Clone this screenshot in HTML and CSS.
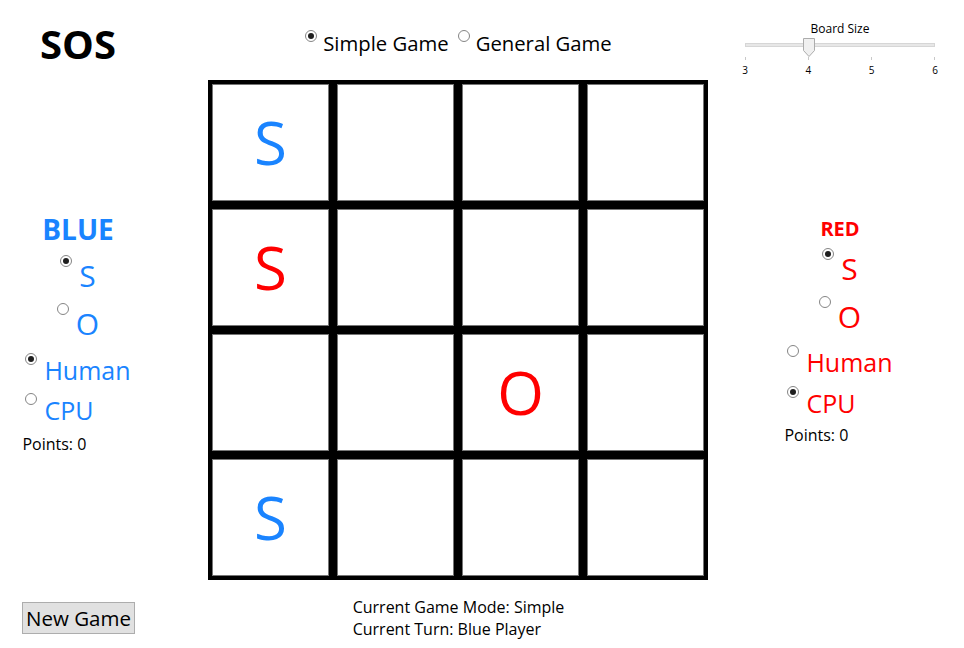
FILE: index.html
```html
<!DOCTYPE html>
<html lang="en">
<head>
<meta charset="utf-8">
<title>SOS</title>
<link rel="stylesheet" href="styles.css">
</head>
<body>
<div class="app">
  <div class="head-left"><h1 class="title">SOS</h1></div>
  <div class="head-mid">
    <div class="modes">
      <label class="radio"><span class="dot on"></span><span>Simple Game</span></label>
      <label class="radio"><span class="dot"></span><span>General Game</span></label>
    </div>
  </div>
  <div class="head-right">
    <div class="slider">
      <div class="slider-label">Board Size</div>
      <div class="track"><span class="thumb" style="left: calc(33.333% - 6px)"><svg width="12" height="19" viewBox="0 0 12 19"><path d="M0.5 0.5 H11.5 V12.5 L6 18.5 L0.5 12.5 Z" fill="#f0f0f0" stroke="#acacac"/></svg></span></div>
      <div class="ticks">
        <span class="tick">3</span>
        <span class="tick">4</span>
        <span class="tick">5</span>
        <span class="tick">6</span>
      </div>
    </div>
  </div>

  <section class="panel panel-blue">
    <div class="side-title">BLUE</div>
    <label class="pick pick-s"><span class="dot on"></span><span>S</span></label>
    <label class="pick pick-o"><span class="dot"></span><span>O</span></label>
    <div class="group">
      <label class="who who-human"><span class="dot on"></span><span>Human</span></label>
      <label class="who who-cpu"><span class="dot"></span><span>CPU</span></label>
      <div class="points">Points: 0</div>
    </div>
  </section>

  <div class="board">
    <div class="cell"><div class="btn blue">S</div></div>
    <div class="cell"><div class="btn"></div></div>
    <div class="cell"><div class="btn"></div></div>
    <div class="cell"><div class="btn"></div></div>
    <div class="cell"><div class="btn red">S</div></div>
    <div class="cell"><div class="btn"></div></div>
    <div class="cell"><div class="btn"></div></div>
    <div class="cell"><div class="btn"></div></div>
    <div class="cell"><div class="btn"></div></div>
    <div class="cell"><div class="btn"></div></div>
    <div class="cell"><div class="btn red">O</div></div>
    <div class="cell"><div class="btn"></div></div>
    <div class="cell"><div class="btn blue">S</div></div>
    <div class="cell"><div class="btn"></div></div>
    <div class="cell"><div class="btn"></div></div>
    <div class="cell"><div class="btn"></div></div>
  </div>

  <section class="panel panel-red">
    <div class="side-title">RED</div>
    <label class="pick pick-s"><span class="dot on"></span><span>S</span></label>
    <label class="pick pick-o"><span class="dot"></span><span>O</span></label>
    <div class="group">
      <label class="who who-human"><span class="dot"></span><span>Human</span></label>
      <label class="who who-cpu"><span class="dot on"></span><span>CPU</span></label>
      <div class="points">Points: 0</div>
    </div>
  </section>

  <div class="foot-left"><button class="new-game" type="button">New Game</button></div>
  <div class="foot-mid">
    <div class="status">
      <div>Current Game Mode: Simple</div>
      <div>Current Turn: Blue Player</div>
    </div>
  </div>
  <div class="foot-right"></div>
</div>
</body>
</html>
```

FILE: styles.css
```css
html, body {
  margin: 0;
  padding: 0;
  background: #ffffff;
}

body {
  font-family: "Open Sans", "Noto Sans", "Liberation Sans", sans-serif;
  color: #000000;
}

.app {
  width: 964px;
  height: 648px;
  display: grid;
  grid-template-columns: 208px 501px 255px;
  grid-template-rows: 80px 501px 67px;
}

/* ---------- header ---------- */
.head-left {
  width: 156px;
  display: flex;
  justify-content: center;
}

.title {
  margin: 16px 0 0;
  font-size: 40px;
  font-weight: 700;
  line-height: normal;
}

.head-mid {
  display: flex;
  justify-content: center;
}

.modes {
  margin-top: 30px;
  display: flex;
  gap: 9px;
  font-size: 20.3px;
  line-height: 27px;
}

.radio {
  display: flex;
  align-items: flex-start;
  gap: 6px;
}

.dot {
  width: 12px;
  height: 12px;
  box-sizing: border-box;
  border: 1px solid #858585;
  border-radius: 50%;
  background: #ffffff;
  display: flex;
  align-items: center;
  justify-content: center;
  flex: none;
}

.dot.on::after {
  content: "";
  width: 6px;
  height: 6px;
  border-radius: 50%;
  background: #1f1f1f;
}

.head-right {
  box-sizing: border-box;
  padding-left: 7px;
  display: flex;
  justify-content: center;
}

.slider {
  width: 196px;
  padding-top: 21px;
}

.slider-label {
  font-size: 12px;
  line-height: 16px;
  text-align: center;
}

.track {
  position: relative;
  margin: 6px 3px 0;
  height: 4px;
  box-sizing: border-box;
  background: #e7e7e7;
  border: 1px solid #d6d6d6;
}

.thumb {
  position: absolute;
  top: -6px;
  width: 12px;
  height: 19px;
  display: block;
}

.thumb svg {
  display: block;
}

.ticks {
  margin: 10px -4px 0;
  display: flex;
  justify-content: space-between;
}

.tick {
  width: 14px;
  display: flex;
  flex-direction: column;
  align-items: center;
  font-size: 10px;
  line-height: 14px;
}

.tick::before {
  content: "";
  width: 1px;
  height: 3px;
  background: #c8c8c8;
  margin-bottom: 3px;
}

/* ---------- side panels ---------- */
.panel {
  display: flex;
  flex-direction: column;
  align-items: center;
  line-height: normal;
}

.panel-blue {
  width: 156px;
  padding-top: 130px;
  color: #1a84ff;
}

.panel-red {
  box-sizing: border-box;
  padding-left: 7px;
  padding-top: 135px;
  color: #ff0000;
}

.side-title {
  font-weight: 700;
}

.panel-blue .side-title {
  font-size: 28px;
}

.panel-red .side-title {
  font-size: 20px;
}

.pick,
.who {
  display: flex;
  align-items: flex-start;
  gap: 7px;
}

.pick {
  font-size: 30px;
}

.who {
  font-size: 25px;
}

.group {
  display: flex;
  flex-direction: column;
  align-items: flex-start;
}

.points {
  font-size: 16px;
  color: #000000;
  margin-left: -3px;
}

.panel-blue .pick-s { margin-top: 7px; }
.panel-blue .pick-o { margin-top: 7px; }
.panel-blue .group { margin-top: 9px; }
.panel-blue .who-cpu { margin-top: 6px; }
.panel-blue .points { margin-top: 6px; }

.panel-red .pick-s { margin-top: 6px; }
.panel-red .pick-o { margin-top: 7px; }
.panel-red .group { margin-top: 8px; }
.panel-red .who-cpu { margin-top: 7px; }
.panel-red .points { margin-top: 4px; }

/* ---------- board ---------- */
.board {
  width: 500px;
  height: 500px;
  display: grid;
  grid-template-columns: repeat(4, 125px);
  grid-template-rows: repeat(4, 125px);
}

.cell {
  box-sizing: border-box;
  border: 4px solid #000000;
  display: flex;
}

.btn {
  flex: 1;
  box-sizing: border-box;
  border: 1px solid #767676;
  background: #ffffff;
  display: flex;
  align-items: center;
  justify-content: center;
  font-size: 60px;
  line-height: normal;
  padding-bottom: 2px;
}

.btn.blue { color: #1a84ff; }
.btn.red { color: #ff0000; }

/* ---------- footer ---------- */
.foot-left {
  padding: 21px 0 0 22px;
}

.new-game {
  margin: 0;
  height: 32px;
  padding: 0 3px;
  font-family: "Open Sans", "Noto Sans", "Liberation Sans", sans-serif;
  font-size: 20.5px;
  line-height: 30px;
  color: #000000;
  background: #e1e1e1;
  border: 1px solid #adadad;
  border-radius: 0;
}

.foot-mid {
  display: flex;
  justify-content: center;
}

.status {
  margin-top: 15px;
  font-size: 16px;
  line-height: 22px;
}
```
